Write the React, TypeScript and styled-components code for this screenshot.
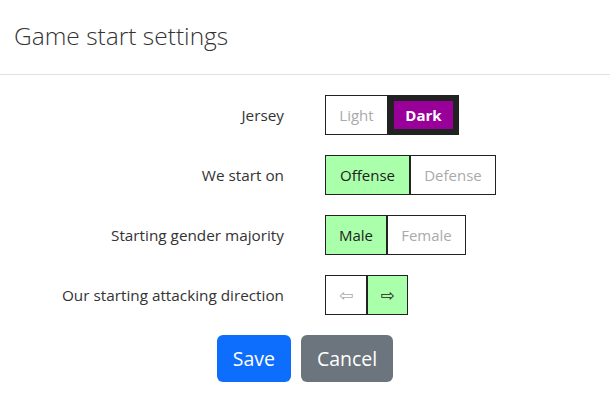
import React, { useState } from "react";
import styled, { createGlobalStyle, css } from "styled-components";

const Global = createGlobalStyle`
  html, body { margin: 0; padding: 0; background: #fff; }
  body { font-family: "Open Sans", "Noto Sans", sans-serif; color: #212529; }
  * { box-sizing: border-box; }
`;

const Page = styled.div`
  width: 610px;
  height: 397px;
  display: flex;
  flex-direction: column;
`;

const Header = styled.div`
  height: 75px;
  padding: 0 14px;
  display: flex;
  align-items: center;
  border-bottom: 1px solid #dee2e6;
`;

const Title = styled.h4`
  margin: 0 0 4px;
  font-family: "Open Sans", sans-serif;
  font-weight: 300;
  font-size: 24.5px;
  color: #333;
`;

const Form = styled.div`
  display: grid;
  grid-template-columns: 305px 305px;
  row-gap: 20px;
  padding-top: 20px;
`;

const Label = styled.div`
  height: 40px;
  display: flex;
  align-items: center;
  justify-content: flex-end;
  padding-right: 21px;
  font-size: 15.3px;
  color: #333;
`;

const Group = styled.div`
  height: 40px;
  display: flex;
  padding-left: 20px;
`;

type BtnProps = { $on?: boolean; $variant?: "green" | "purple"; $w: number };

const Toggle = styled.button<BtnProps>`
  height: 40px;
  width: ${(p) => p.$w}px;
  padding: 0;
  font-family: "Open Sans", sans-serif;
  font-size: 15px;
  border: 1px solid #222;
  background: #fff;
  color: #aaa;
  cursor: pointer;
  display: flex;
  align-items: center;
  justify-content: center;
  ${(p) =>
    p.$on &&
    p.$variant === "green" &&
    css`
      background: #aaffaa;
      color: #222;
    `}
  ${(p) =>
    p.$on &&
    p.$variant === "purple" &&
    css`
      background: #990099;
      color: #fff;
      font-weight: 700;
      border: 6px solid #222;
    `}
`;

const Arrow = styled.span`
  font-family: "DejaVu Sans", sans-serif;
  font-size: 17px;
  line-height: 1;
`;

const Actions = styled.div`
  display: flex;
  justify-content: center;
  gap: 10px;
  margin-top: 20px;
`;

const ActionButton = styled.button<{ $kind: "primary" | "secondary" }>`
  height: 47px;
  padding: 0 16px;
  border: none;
  border-radius: 6px;
  font-family: "Open Sans", sans-serif;
  font-size: 19.5px;
  color: #fff;
  background: ${(p) => (p.$kind === "primary" ? "#0d6efd" : "#6c757d")};
`;

export default function App() {
  const [jersey, setJersey] = useState("dark");
  const [side, setSide] = useState("offense");
  const [gender, setGender] = useState("male");
  const [dir, setDir] = useState("right");
  return (
    <Page>
      <Global />
      <Header>
        <Title>Game start settings</Title>
      </Header>
      <Form>
        <Label>Jersey</Label>
        <Group>
          <Toggle $w={63} $on={jersey === "light"} $variant="green" onClick={() => setJersey("light")}>Light</Toggle>
          <Toggle $w={71} $on={jersey === "dark"} $variant="purple" onClick={() => setJersey("dark")}>Dark</Toggle>
        </Group>
        <Label>We start on</Label>
        <Group>
          <Toggle $w={85} $on={side === "offense"} $variant="green" onClick={() => setSide("offense")}>Offense</Toggle>
          <Toggle $w={86} $on={side === "defense"} $variant="green" onClick={() => setSide("defense")}>Defense</Toggle>
        </Group>
        <Label>Starting gender majority</Label>
        <Group>
          <Toggle $w={62} $on={gender === "male"} $variant="green" onClick={() => setGender("male")}>Male</Toggle>
          <Toggle $w={79} $on={gender === "female"} $variant="green" onClick={() => setGender("female")}>Female</Toggle>
        </Group>
        <Label>Our starting attacking direction</Label>
        <Group>
          <Toggle $w={42} $on={dir === "left"} $variant="green" onClick={() => setDir("left")}><Arrow>⇦</Arrow></Toggle>
          <Toggle $w={41} $on={dir === "right"} $variant="green" onClick={() => setDir("right")}><Arrow>⇨</Arrow></Toggle>
        </Group>
      </Form>
      <Actions>
        <ActionButton $kind="primary">Save</ActionButton>
        <ActionButton $kind="secondary">Cancel</ActionButton>
      </Actions>
    </Page>
  );
}
